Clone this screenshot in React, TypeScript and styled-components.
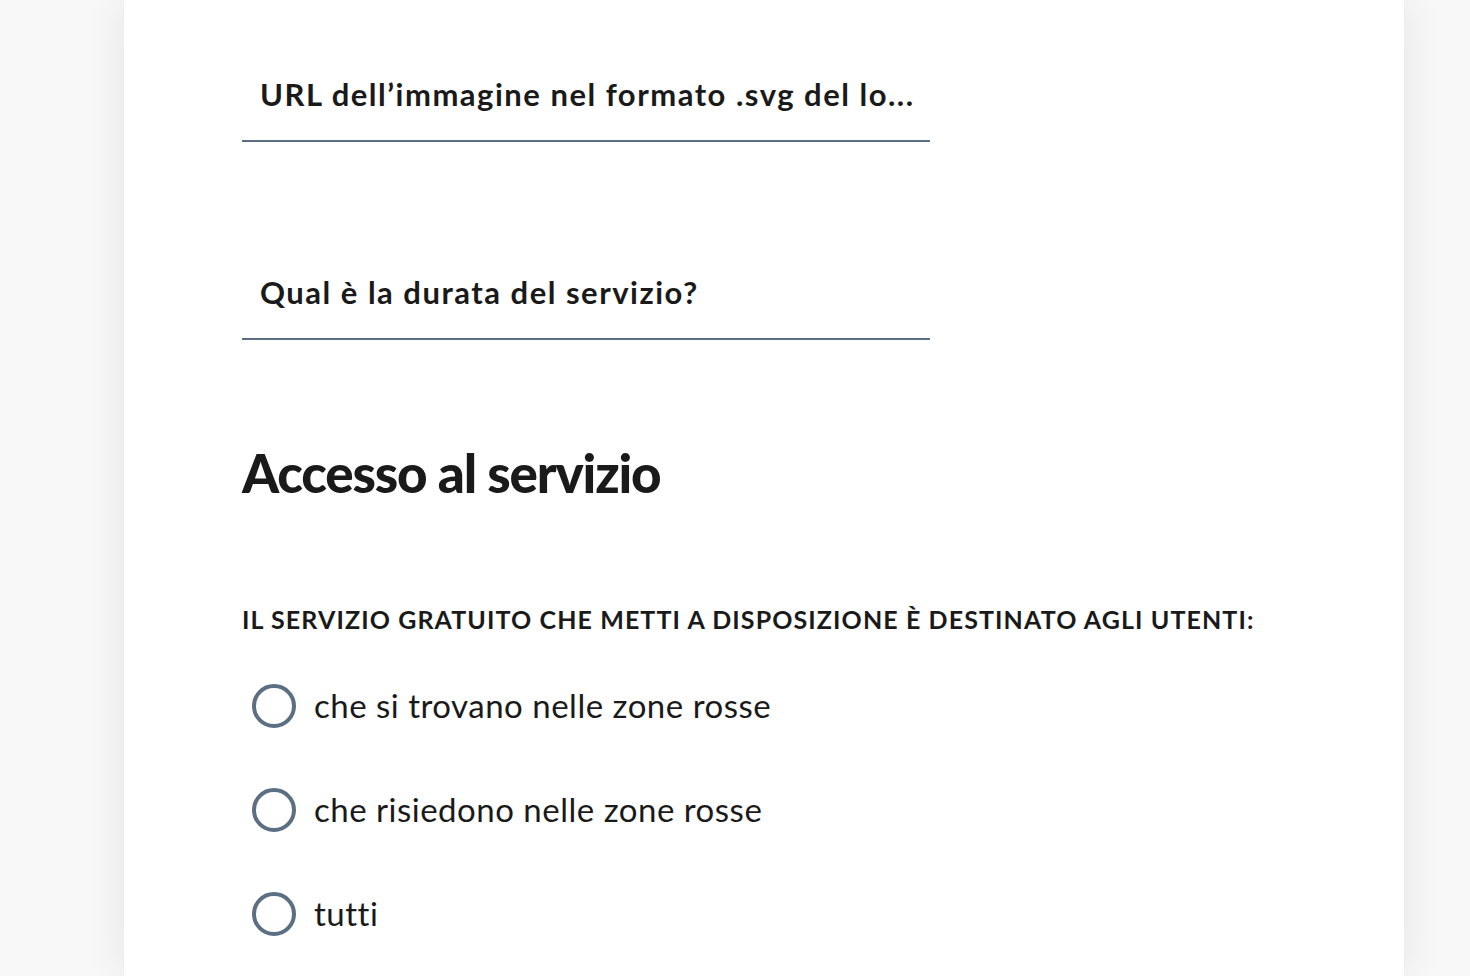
import React from 'react';
import styled, { createGlobalStyle } from 'styled-components';

const TEXT = '#1a1a1a';
const SLATE = '#5c6f82';
const PAGE_BG = '#f8f8f8';

// =============================================================================
// Styled Components
// =============================================================================

const GlobalStyle = createGlobalStyle`
  html, body {
    margin: 0;
    padding: 0;
    background-color: ${PAGE_BG};
  }
  body {
    font-family: Lato, "Open Sans", "Noto Sans", sans-serif;
    color: ${TEXT};
    overflow: hidden;
  }
`;

const Page = styled.div`
  display: flex;
  padding-left: 124px;
  min-height: 976px;
`;

const Card = styled.main`
  width: 1280px;
  min-height: 976px;
  box-sizing: border-box;
  padding: 50px 118px 0;
  background-color: #fff;
  box-shadow: 0 0 40px rgba(0, 0, 0, 0.09);
  display: flex;
  flex-direction: column;
`;

const Field = styled.div<{ $gapTop?: number }>`
  width: 688px;
  height: 92px;
  box-sizing: border-box;
  margin-top: ${(p) => p.$gapTop ?? 0}px;
  padding: 0 8px 0 18px;
  border-bottom: 2px solid ${SLATE};
  font-size: 31px;
  font-weight: 700;
  line-height: 88px;
  letter-spacing: 1.5px;
  white-space: nowrap;
  overflow: hidden;
  text-overflow: ellipsis;
`;

const SectionTitle = styled.h2`
  margin: 101px 0 0;
  font-size: 53px;
  font-weight: 900;
  line-height: 1.2;
  letter-spacing: -1.2px;
`;

const GroupLabel = styled.div`
  margin-top: 99px;
  font-size: 25px;
  font-weight: 700;
  line-height: 1.2;
  text-transform: uppercase;
  letter-spacing: 1.1px;
`;

const Options = styled.div`
  margin-top: 20px;
  display: flex;
  flex-direction: column;
`;

const Option = styled.label`
  display: flex;
  align-items: center;
  gap: 18px;
  height: 104px;
  padding-left: 10px;
  font-size: 33px;
  font-weight: 400;
  line-height: 1.2;
  letter-spacing: 0.5px;
  cursor: pointer;
`;

const Radio = styled.span`
  width: 44px;
  height: 44px;
  box-sizing: border-box;
  border: 4px solid ${SLATE};
  border-radius: 50%;
  flex-shrink: 0;
`;

// =============================================================================
// Main Component
// =============================================================================

const options = ['che si trovano nelle zone rosse', 'che risiedono nelle zone rosse', 'tutti'];

export default function App() {
  return (
    <Page>
      <GlobalStyle />
      <Card>
        <Field>URL dell’immagine nel formato .svg del lo...</Field>
        <Field $gapTop={106}>Qual è la durata del servizio?</Field>
        <SectionTitle>Accesso al servizio</SectionTitle>
        <GroupLabel>Il servizio gratuito che metti a disposizione è destinato agli utenti:</GroupLabel>
        <Options>
          {options.map((o) => (
            <Option key={o}>
              <Radio />
              {o}
            </Option>
          ))}
        </Options>
      </Card>
    </Page>
  );
}
